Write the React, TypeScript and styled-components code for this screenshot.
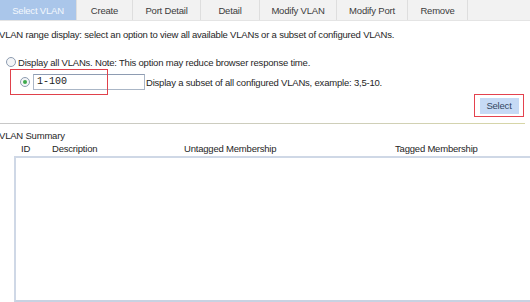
import React from 'react';
import styled, { createGlobalStyle } from 'styled-components';

const GlobalStyle = createGlobalStyle`
  html, body {
    margin: 0;
    padding: 0;
    background: #ffffff;
  }
  body {
    font-family: "Liberation Sans", Arial, sans-serif;
    font-size: 9.5px;
    letter-spacing: -0.2px;
    color: #262626;
    overflow: hidden;
  }
`;

const Page = styled.div`
  width: 530px;
  height: 302px;
  display: flex;
  flex-direction: column;
  overflow: hidden;
`;

const TabBar = styled.div`
  display: flex;
  height: 20px;
  flex: none;
  background: #f2f2f2;
  border-bottom: 1px solid #e4e4e4;
`;

const Tab = styled.div<{ $width: number; $active?: boolean }>`
  width: ${(p) => p.$width}px;
  flex: none;
  display: flex;
  align-items: center;
  justify-content: center;
  box-sizing: border-box;
  border-right: 1px solid #dedede;
  background: ${(p) => (p.$active ? '#aac6ea' : '#f2f2f2')};
  color: ${(p) => (p.$active ? '#f4f8fd' : '#3c3c3c')};
`;

const Intro = styled.div`
  margin: 8px 0 0 -1px;
  height: 12px;
  line-height: 12px;
  white-space: nowrap;
`;

const OptionRow = styled.div`
  display: flex;
  align-items: center;
  height: 12px;
  margin: 15px 0 0 6px;
  white-space: nowrap;
`;

const Radio = styled.span<{ $checked?: boolean }>`
  width: 10px;
  height: 10px;
  box-sizing: border-box;
  flex: none;
  border-radius: 50%;
  border: 1px solid #8d9cb0;
  background: #f3f5f7;
  display: flex;
  align-items: center;
  justify-content: center;
  margin-right: ${(p) => (p.$checked ? 3 : 2)}px;
  &::after {
    content: '';
    display: ${(p) => (p.$checked ? 'block' : 'none')};
    width: 4px;
    height: 4px;
    border-radius: 50%;
    background: #3ea94c;
  }
`;

const RangeRow = styled.div`
  position: relative;
  display: flex;
  align-items: center;
  height: 16px;
  margin-top: 6px;
  padding-left: 20px;
  white-space: nowrap;
`;

const Highlight = styled.div`
  position: absolute;
  left: 10px;
  top: -5px;
  width: 98px;
  height: 26px;
  box-sizing: border-box;
  border: 1px solid #e0414b;
  pointer-events: none;
`;

const RangeInput = styled.div`
  width: 112px;
  height: 16px;
  flex: none;
  box-sizing: border-box;
  border: 1px solid #aab6c6;
  border-top-color: #8e9cb2;
  background: #fff;
  font-family: "Liberation Mono", "Courier New", monospace;
  font-size: 10px;
  letter-spacing: 0;
  line-height: 14px;
  padding-left: 3px;
  color: #222;
`;

const Hint = styled.span`
  margin-left: 1px;
  margin-top: 1px;
`;

const ButtonRow = styled.div`
  display: flex;
  justify-content: flex-end;
  padding-right: 6px;
  margin-top: 4px;
`;

const ButtonFrame = styled.div`
  width: 50px;
  height: 23px;
  box-sizing: border-box;
  border: 1px solid #e4424e;
  display: flex;
  align-items: center;
  justify-content: center;
`;

const SelectButton = styled.div`
  width: 39px;
  height: 16px;
  background: #c6daf5;
  color: #34465e;
  display: flex;
  align-items: center;
  justify-content: center;
`;

const Divider = styled.div`
  height: 1px;
  width: 525px;
  flex: none;
  margin-top: 6px;
  background: linear-gradient(to right, #c8c8c8, #cfcfb8 70%, #d7d6a6);
`;

const SectionTitle = styled.div`
  margin: 6px 0 0 -1px;
  height: 12px;
  line-height: 12px;
`;

const HeaderRow = styled.div`
  position: relative;
  height: 12px;
  line-height: 12px;
  margin-top: 1px;
`;

const HeaderCell = styled.span<{ $left: number }>`
  position: absolute;
  left: ${(p) => p.$left}px;
  top: 0;
  white-space: nowrap;
`;

const ListBox = styled.div`
  margin: 1px 0 0 14px;
  flex: 1;
  box-sizing: border-box;
  border-top: 2px solid #cfd8e6;
  border-left: 2px solid #cfd8e6;
  border-bottom: 2px solid #c8d2e2;
  background: #ffffff;
`;

const tabs: { label: string; width: number }[] = [
  { label: 'Select VLAN', width: 77 },
  { label: 'Create', width: 56 },
  { label: 'Port Detail', width: 68 },
  { label: 'Detail', width: 59 },
  { label: 'Modify VLAN', width: 77 },
  { label: 'Modify Port', width: 71 },
  { label: 'Remove', width: 60 },
];

export default function App() {
  return (
    <Page>
      <GlobalStyle />
      <TabBar>
        {tabs.map((t, i) => (
          <Tab key={t.label} $width={t.width} $active={i === 0}>
            {t.label}
          </Tab>
        ))}
      </TabBar>
      <Intro>
        VLAN range display: select an option to view all available VLANs or a subset of configured VLANs.
      </Intro>
      <OptionRow>
        <Radio />
        Display all VLANs. Note: This option may reduce browser response time.
      </OptionRow>
      <RangeRow>
        <Radio $checked />
        <RangeInput>1-100</RangeInput>
        <Hint>Display a subset of all configured VLANs, example: 3,5-10.</Hint>
        <Highlight />
      </RangeRow>
      <ButtonRow>
        <ButtonFrame>
          <SelectButton>Select</SelectButton>
        </ButtonFrame>
      </ButtonRow>
      <Divider />
      <SectionTitle>VLAN Summary</SectionTitle>
      <HeaderRow>
        <HeaderCell $left={21}>ID</HeaderCell>
        <HeaderCell $left={52}>Description</HeaderCell>
        <HeaderCell $left={184}>Untagged Membership</HeaderCell>
        <HeaderCell $left={395}>Tagged Membership</HeaderCell>
      </HeaderRow>
      <ListBox />
    </Page>
  );
}
